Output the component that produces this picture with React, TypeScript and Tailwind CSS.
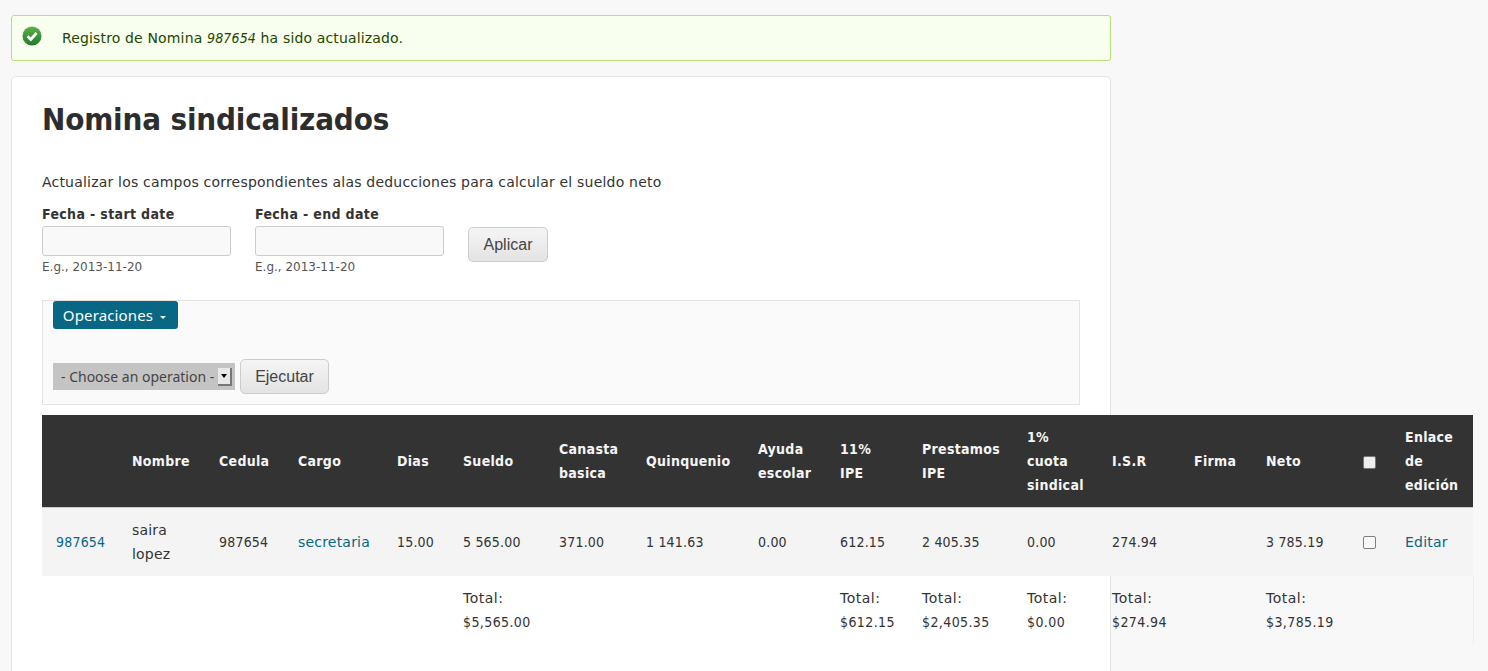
import React from "react";

const TXT = "font-['DejaVu_Sans',sans-serif] tracking-[0.2px]";

const cols = [
  { w: "w-[76px]", h: [""], b: "987654", link: true, t: [] as string[] },
  { w: "w-[87px]", h: ["Nombre"], b: "saira lopez", txt: true, t: [] },
  { w: "w-[79px]", h: ["Cedula"], b: "987654", t: [] },
  { w: "w-[99px]", h: ["Cargo"], b: "secretaria", txt: true, link: true, t: [] },
  { w: "w-[66px]", h: ["Dias"], b: "15.00", t: [] },
  { w: "w-[96px]", h: ["Sueldo"], b: "5 565.00", t: ["Total:", "$5,565.00"] },
  { w: "w-[87px]", h: ["Canasta", "basica"], b: "371.00", t: [] },
  { w: "w-[112px]", h: ["Quinquenio"], b: "1 141.63", t: [] },
  { w: "w-[82px]", h: ["Ayuda", "escolar"], b: "0.00", t: [] },
  { w: "w-[82px]", h: ["11%", "IPE"], b: "612.15", t: ["Total:", "$612.15"] },
  { w: "w-[105px]", h: ["Prestamos", "IPE"], b: "2 405.35", t: ["Total:", "$2,405.35"] },
  { w: "w-[85px]", h: ["1%", "cuota", "sindical"], b: "0.00", t: ["Total:", "$0.00"] },
  { w: "w-[82px]", h: ["I.S.R"], b: "274.94", t: ["Total:", "$274.94"] },
  { w: "w-[72px]", h: ["Firma"], b: "", t: [] },
  { w: "w-[97px]", h: ["Neto"], b: "3 785.19", t: ["Total:", "$3,785.19"] },
  { w: "w-[42px]", h: ["__cb"], b: "__cb", t: [] },
  { w: "w-[82px]", h: ["Enlace", "de", "edición"], b: "Editar", txt: true, link: true, t: [] },
];

function Lines({ l }: { l: string[] }) {
  return (
    <>
      {l.map((s, i) => (
        <div key={i} className="whitespace-nowrap">{s}</div>
      ))}
    </>
  );
}

export default function App() {
  return (
    <div className="min-h-[671px] h-[671px] overflow-hidden bg-[#f8f8f8] pl-[11px] pt-[15px] font-['DejaVu_Sans_Condensed','DejaVu_Sans',sans-serif] text-[14px] leading-[24px] tracking-[0.2px] text-[#333333]">
      <div className="w-[1100px] h-[46px] rounded-[3px] border border-[#b4e374] bg-[#f8ffee] flex items-center text-[#234600]">
        <svg className="ml-[10px] mt-[-4px] shrink-0" width="20" height="20" viewBox="0 0 20 20">
          <defs>
            <linearGradient id="g" x1="0" y1="0" x2="0" y2="1">
              <stop offset="0" stopColor="#5fb04a" />
              <stop offset="1" stopColor="#1f7a2a" />
            </linearGradient>
          </defs>
          <circle cx="10" cy="10" r="9.5" fill="url(#g)" />
          <path d="M5.5 10.2 L8.8 13.4 L14.6 7" fill="none" stroke="#fff" strokeWidth="2.8" />
        </svg>
        <span className={`ml-[20px] ${TXT} tracking-[0.15px]`}>
          Registro de Nomina <em className="font-['DejaVu_Sans_Condensed',sans-serif]">987654</em> ha sido actualizado.
        </span>
      </div>
      <div className="mt-[15px] w-[1100px] h-[640px] rounded-t-[5px] border border-[#e4e4e4] bg-white pl-[30px] pr-[30px] pt-[22px]">
        <h1 className="text-[31px] leading-[40px] font-bold tracking-[-0.15px] text-[#2d2d2d]">Nomina sindicalizados</h1>
        <p className={`mt-[31px] ${TXT}`}>Actualizar los campos correspondientes alas deducciones para calcular el sueldo neto</p>
        <div className="mt-[10px] flex items-start">
          {["Fecha - start date", "Fecha - end date"].map((l) => (
            <div key={l} className="w-[213px]">
              <div className="font-bold leading-[20px] tracking-[0.35px]">{l}</div>
              <div className="mt-[2px] w-[189px] h-[30px] rounded-[3px] border border-[#cccccc] bg-[#f9f9f9]" />
              <div className="mt-[2px] font-['DejaVu_Sans',sans-serif] tracking-normal text-[12px] leading-[18px] text-[#555555]">E.g., 2013-11-20</div>
            </div>
          ))}
          <button className="mt-[23px] w-[80px] h-[35px] rounded-[5px] border border-[#cccccc] bg-gradient-to-b from-[#f5f5f5] to-[#e3e3e3] font-['Liberation_Sans',sans-serif] tracking-normal text-[16px] text-[#444444]">
            Aplicar
          </button>
        </div>
        <div className="mt-[24px] w-[1038px] h-[105px] border border-[#e4e4e4] bg-[#fafafa] pl-[10px]">
          <button className="block w-[125px] h-[28px] rounded-[3px] bg-[#086782] text-white font-['Noto_Sans',sans-serif] tracking-[0.15px] text-[15px] leading-[28px] pr-[2px]">
            Operaciones
            <span className="inline-block ml-[7px] mb-[2px] border-x-[3px] border-t-[3px] border-x-transparent border-t-white" />
          </button>
          <div className="mt-[30px] flex items-center">
            <div className="w-[182px] h-[27px] bg-[#c4c4c4] flex items-center pl-[8px] font-['Noto_Sans',sans-serif] tracking-normal text-[14px] text-[#444444]">
              <span className="whitespace-nowrap">- Choose an operation -</span>
              <span className="ml-[4px] w-[14px] h-[18px] flex items-center justify-center bg-[#e8e8e8] border-r-2 border-b-2 border-[#777777]">
                <span className="border-x-[3px] border-t-[4px] border-x-transparent border-t-black" />
              </span>
            </div>
            <button className="ml-[5px] w-[89px] h-[35px] rounded-[5px] border border-[#cccccc] bg-gradient-to-b from-[#f5f5f5] to-[#e3e3e3] font-['Liberation_Sans',sans-serif] tracking-normal text-[16px] text-[#444444]">
              Ejecutar
            </button>
          </div>
        </div>
        <table className="mt-[10px] w-[1431px] max-w-none table-fixed border-collapse">
          <thead>
            <tr className="bg-[#333333] text-[#f5f5f5] border-b border-[#cccccc] tracking-[0.3px]">
              {cols.map((c, i) => (
                <th key={i} className={`${c.w} h-[92px] px-[14px] text-left font-bold align-middle`}>
                  {c.h[0] === "__cb" ? (
                    <input type="checkbox" className="block mt-[3px] h-[13px] w-[13px] appearance-none rounded-[2px] border border-[#777777] bg-[#eeeeee]" />
                  ) : (
                    <Lines l={c.h} />
                  )}
                </th>
              ))}
            </tr>
          </thead>
          <tbody>
            <tr className="bg-[#f4f4f4]">
              {cols.map((c, i) => (
                <td key={i} className={`h-[69px] px-[14px] align-middle ${c.link ? "text-[#086782]" : ""} ${c.txt ? TXT : ""}`}>
                  {c.b === "__cb" ? (
                    <input type="checkbox" className="block mt-[2px] h-[13px] w-[13px] appearance-none rounded-[2px] border border-[#808080] bg-[#f8f8f8]" />
                  ) : c.b === "saira lopez" ? (
                    <Lines l={["saira", "lopez"]} />
                  ) : (
                    c.b
                  )}
                </td>
              ))}
            </tr>
            <tr>
              {cols.map((c, i) => (
                <td key={i} className={`h-[68px] px-[14px] align-middle ${i === cols.length - 1 ? "border-r border-[#eeeeee]" : ""}`}>
                  {c.t.length > 0 && (
                    <>
                      <div className={`whitespace-nowrap ${TXT} tracking-[0.5px]`}>{c.t[0]}</div>
                      <div className="whitespace-nowrap tracking-[0.4px]">{c.t[1]}</div>
                    </>
                  )}
                </td>
              ))}
            </tr>
          </tbody>
        </table>
      </div>
    </div>
  );
}
